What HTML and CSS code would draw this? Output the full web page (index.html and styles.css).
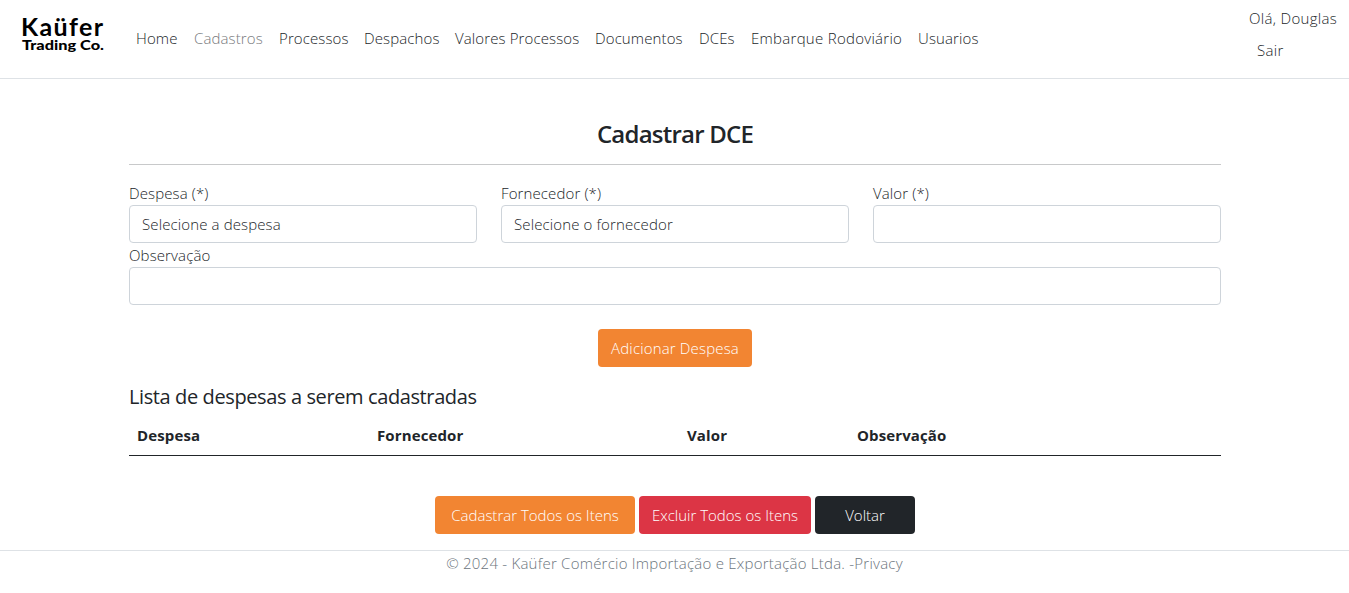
FILE: index.html
```html
<!DOCTYPE html>
<html lang="pt-BR">
<head>
<meta charset="utf-8">
<title>Cadastrar DCE</title>
<link rel="stylesheet" href="styles.css">
</head>
<body>
<header class="header">
  <svg class="logo" width="84" height="40" viewBox="0 0 84 40" role="img" aria-label="Kaüfer Trading Co.">
    <text class="logo-name" x="0" y="22" textLength="82">Kaüfer</text>
    <text class="logo-sub" x="1" y="36" textLength="82" lengthAdjust="spacingAndGlyphs">Trading Co.</text>
  </svg>
  <nav class="nav">
    <a>Home</a><a class="active">Cadastros</a><a>Processos</a><a>Despachos</a><a>Valores Processos</a><a>Documentos</a><a>DCEs</a><a class="road">Embarque Rodoviário</a><a>Usuarios</a>
  </nav>
  <div class="user"><span>Olá, Douglas</span><a class="logout">Sair</a></div>
</header>
<main class="container">
  <h3 class="title">Cadastrar DCE</h3>
  <form class="form">
    <div class="field"><label>Despesa (*)</label><div class="control">Selecione a despesa</div></div>
    <div class="field"><label>Fornecedor (*)</label><div class="control">Selecione o fornecedor</div></div>
    <div class="field"><label>Valor (*)</label><div class="control"></div></div>
    <div class="field wide"><label>Observação</label><div class="control"></div></div>
  </form>
  <div class="actions add"><button class="btn orange w-add">Adicionar Despesa</button></div>
  <h5 class="subtitle">Lista de despesas a serem cadastradas</h5>
  <div class="table-head"><span>Despesa</span><span>Fornecedor</span><span>Valor</span><span>Observação</span></div>
  <div class="actions bottom">
    <button class="btn orange w-all">Cadastrar Todos os Itens</button>
    <button class="btn red w-del">Excluir Todos os Itens</button>
    <button class="btn dark w-back">Voltar</button>
  </div>
</main>
<footer class="footer">© 2024 - Kaüfer Comércio Importação e Exportação Ltda. -<a>Privacy</a></footer>
</body>
</html>
```
FILE: styles.css
```css
* { box-sizing: border-box; }
body {
  margin: 0;
  background: #fff;
  color: #212529;
  font: 300 15px/24px "Open Sans", "Noto Sans", sans-serif;
  letter-spacing: 0.12px;
  white-space: nowrap;
}
.header {
  display: flex;
  height: 79px;
  padding: 0 12px 0 21px;
  border-bottom: 1px solid #dee2e6;
}
.logo { margin-top: 14px; overflow: visible; fill: #000; letter-spacing: 0; }
.logo-name { font: 700 25px "Lato", sans-serif; }
.logo-sub { font: 900 14px "Lato", sans-serif; }
.nav {
  display: grid;
  grid-template-columns: 42px 69px 69px 75px 124px 88px 36px 151px 61px;
  column-gap: 16px;
  margin: 26px 0 0 31px;
}
.active { color: #77797c; }
.road { letter-spacing: 0.28px; }
.user {
  display: flex;
  flex-direction: column;
  gap: 8px;
  width: 88px;
  margin-left: auto;
  padding-top: 6px;
  letter-spacing: 0.32px;
}
.logout { padding-left: 8px; }
.container { width: 1092px; margin: 0 auto 0 129px; }
.title {
  margin: 0 0 16px;
  padding: 39px 0 15px;
  border-bottom: 1px solid #c8c9ca;
  font-size: 24px;
  line-height: 31px;
  font-weight: 600;
  letter-spacing: -0.78px;
  text-align: center;
}
.form { display: grid; grid-template-columns: repeat(3, 348px); column-gap: 24px; }
.field { display: flex; flex-direction: column; height: 62px; }
.field label { height: 24px; }
.wide { grid-column: 1 / -1; }
.control {
  height: 38px;
  padding: 6px 12px;
  border: 1px solid #ced4da;
  border-radius: 4px;
}
.actions { display: flex; justify-content: center; gap: 4px; }
.add { margin-top: 24px; }
.bottom { margin-top: 40px; }
.btn {
  height: 38px;
  padding: 0;
  border: 0;
  border-radius: 4px;
  color: #fff;
  font: inherit;
  letter-spacing: 0;
}
.orange { background: #f28532; }
.red { background: #dc3545; }
.dark { background: #212529; }
.w-add { width: 154px; letter-spacing: 0.16px; }
.w-all { width: 200px; }
.w-del { width: 172px; }
.w-back { width: 100px; }
.subtitle {
  margin: 18px 0 7px;
  font-size: 20px;
  line-height: 24px;
  font-weight: 400;
  letter-spacing: -0.39px;
}
.table-head {
  display: grid;
  grid-template-columns: 240px 310px 170px 1fr;
  height: 40px;
  padding: 7px 8px;
  border-bottom: 1px solid #212529;
  font-weight: 700;
}
.footer {
  height: 43px;
  margin-top: 16px;
  border-top: 1px solid #dee2e6;
  color: #6c757d;
  letter-spacing: 0.23px;
  text-align: center;
}
```
